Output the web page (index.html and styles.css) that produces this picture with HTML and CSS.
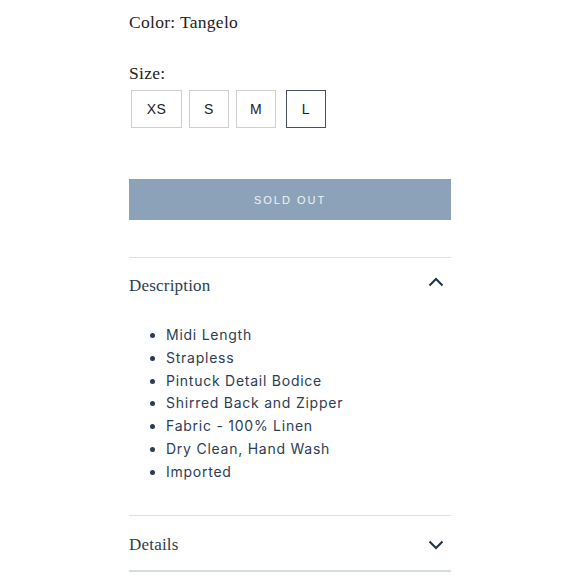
FILE: index.html
```html
<!DOCTYPE html>
<html>
<head>
<meta charset="utf-8">
<link rel="stylesheet" href="styles.css">
</head>
<body>
<div class="product">
  <div class="color-label">Color: Tangelo</div>
  <div class="size-label">Size:</div>
  <div class="sizes">
    <button class="size size-xs">XS</button>
    <button class="size">S</button>
    <button class="size">M</button>
    <button class="size active">L</button>
  </div>
  <button class="sold-out">SOLD OUT</button>
  <div class="accordion">
    <div class="acc-head open">
      <span class="acc-title">Description</span>
      <svg class="chev" width="16" height="10" viewBox="0 0 16 10"><path d="M1.5 8.5 L8 2 L14.5 8.5" fill="none" stroke="#1f3349" stroke-width="2"/></svg>
    </div>
    <ul class="acc-list">
      <li>Midi Length</li>
      <li>Strapless</li>
      <li>Pintuck Detail Bodice</li>
      <li>Shirred Back and Zipper</li>
      <li>Fabric - 100% Linen</li>
      <li>Dry Clean, Hand Wash</li>
      <li>Imported</li>
    </ul>
  </div>
  <div class="accordion last">
    <div class="acc-head closed">
      <span class="acc-title">Details</span>
      <svg class="chev" width="16" height="10" viewBox="0 0 16 10"><path d="M1.5 1.5 L8 8 L14.5 1.5" fill="none" stroke="#1f3349" stroke-width="2"/></svg>
    </div>
  </div>
</div>
</body>
</html>
```
FILE: styles.css
```css
html, body {
  margin: 0;
  padding: 0;
  background: #fff;
}
.product {
  width: 322px;
  margin-left: 129px;
  padding-top: 12px;
}
.color-label, .size-label {
  font-family: "Liberation Serif", serif;
  font-size: 17.5px;
  line-height: 20px;
  letter-spacing: 0.3px;
  color: #222;
}
.size-label {
  margin-top: 31px;
}
.sizes {
  display: flex;
  gap: 7px;
  margin-top: 7px;
  padding-left: 2px;
}
.size {
  box-sizing: border-box;
  height: 38px;
  width: 40px;
  border: 1px solid #cfcfcf;
  background: #fff;
  font-family: "Liberation Sans", sans-serif;
  font-size: 14px;
  letter-spacing: 0.5px;
  color: #222;
  padding: 0;
}
.size-xs { width: 51px; }
.size.active {
  border: 1px solid #47525e;
  margin-left: 3px;
}
.sold-out {
  display: block;
  width: 322px;
  height: 41px;
  margin-top: 51px;
  border: none;
  background: #8ca2b8;
  color: #f0f3f7;
  font-family: "Liberation Sans", sans-serif;
  font-size: 11px;
  letter-spacing: 2px;
}
.accordion {
  border-top: 1px solid #dbe1e7;
  margin-top: 37px;
}
.accordion.last {
  margin-top: 31px;
  border-bottom: 2px solid #d5dde4;
}
.acc-head {
  display: flex;
  justify-content: space-between;
  align-items: center;
  height: 56px;
  padding-right: 7px;
}
.acc-head.closed {
  height: 49px;
  padding-top: 5px;
}
.acc-title {
  font-family: "Liberation Serif", serif;
  font-size: 17px;
  color: #2b3d55;
  letter-spacing: 0.2px;
}
.open .chev { margin-top: -8px; }
.acc-list {
  margin: 0;
  padding: 10px 0 0 37px;
  list-style: disc;
  font-family: "Inter", sans-serif;
  font-size: 14px;
  line-height: 22.8px;
  letter-spacing: 0.75px;
  color: #2b3d55;
}
.acc-list li {
  padding-left: 0;
}
```
